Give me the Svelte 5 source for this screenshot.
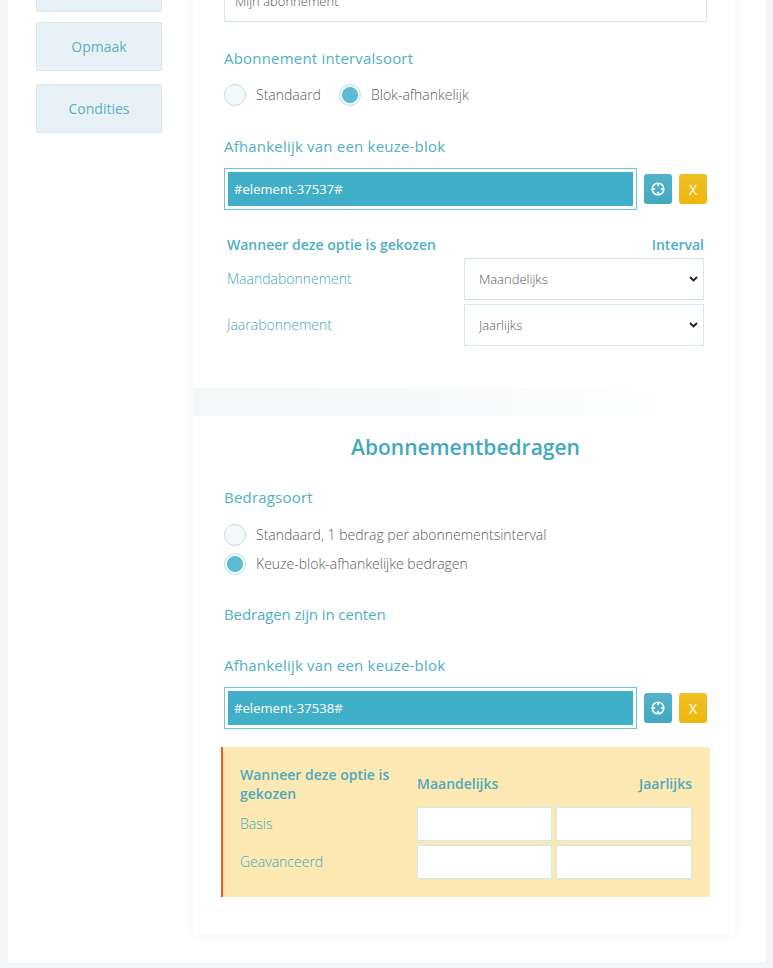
<script>
  const tabs = ["Instellingen", "Opmaak", "Condities"];
  const intervals = [
    ["Maandabonnement", "Maandelijks"],
    ["Jaarabonnement", "Jaarlijks"],
  ];
  const amounts = ["Basis", "Geavanceerd"];
</script>

<div class="page">
  <div class="panel">
    <aside class="sidebar">
      {#each tabs as tab, i}
        <div class="tab">{#if i > 0}{tab}{/if}</div>
      {/each}
    </aside>

    <main class="main">
      <section class="card first">
        <input class="text-input" value="Mijn abonnement" />

        <div class="label interval-label">Abonnement intervalsoort</div>
        <div class="radios inline">
          <label class="radio"><input type="radio" name="soort" /><span>Standaard</span></label>
          <label class="radio"><input type="radio" name="soort" checked /><span>Blok-afhankelijk</span></label>
        </div>

        <div class="label block-label">Afhankelijk van een keuze-blok</div>
        <div class="picker">
          <div class="picked"><span>#element-37537#</span></div>
          <button class="btn target" aria-label="Kies element">
            <svg width="16" height="16" viewBox="0 0 16 16" fill="none" stroke="currentColor">
              <circle cx="8" cy="8" r="5.8" stroke-width="1.6" />
              <path d="M8 2.2v3M8 10.8v3M2.2 8h3M10.8 8h3" stroke-width="1.6" />
            </svg>
          </button>
          <button class="btn remove">X</button>
        </div>

        <div class="map-head">
          <strong>Wanneer deze optie is gekozen</strong>
          <strong>Interval</strong>
        </div>
        {#each intervals as [name, value]}
          <div class="map-row">
            <span class="name">{name}</span>
            <select>
              <option selected={value === "Maandelijks"}>Maandelijks</option>
              <option selected={value === "Jaarlijks"}>Jaarlijks</option>
            </select>
          </div>
        {/each}
      </section>

      <div class="divider"></div>

      <section class="card second">
        <h2>Abonnementbedragen</h2>

        <div class="label">Bedragsoort</div>
        <div class="radios stacked">
          <label class="radio"><input type="radio" name="bedrag" /><span>Standaard, 1 bedrag per abonnementsinterval</span></label>
          <label class="radio"><input type="radio" name="bedrag" checked /><span>Keuze-blok-afhankelijke bedragen</span></label>
        </div>

        <div class="label cents">Bedragen zijn in centen</div>

        <div class="label block-label-2">Afhankelijk van een keuze-blok</div>
        <div class="picker">
          <div class="picked"><span>#element-37538#</span></div>
          <button class="btn target" aria-label="Kies element">
            <svg width="16" height="16" viewBox="0 0 16 16" fill="none" stroke="currentColor">
              <circle cx="8" cy="8" r="5.8" stroke-width="1.6" />
              <path d="M8 2.2v3M8 10.8v3M2.2 8h3M10.8 8h3" stroke-width="1.6" />
            </svg>
          </button>
          <button class="btn remove">X</button>
        </div>

        <div class="warning">
          <strong class="head">Wanneer deze optie is gekozen</strong>
          <strong class="col">Maandelijks</strong>
          <strong class="col right">Jaarlijks</strong>
          {#each amounts as name}
            <span class="name">{name}</span>
            <input class="cell" />
            <input class="cell" />
          {/each}
        </div>
      </section>
    </main>
  </div>
</div>

<style>
  :global(body) {
    background: #f3f5f7;
  }
  .page {
    height: 968px;
    overflow: hidden;
    padding: 0 7px 0 8px;
    box-sizing: border-box;
    font-family: "Open Sans", "Noto Sans", sans-serif;
    color: #555;
  }
  .panel {
    display: flex;
    height: 962px;
    overflow: hidden;
    background: #fff;
  }
  .sidebar {
    width: 185px;
    flex: none;
    box-sizing: border-box;
    padding-left: 28px;
    margin-top: -37px;
    display: flex;
    flex-direction: column;
    gap: 13px;
  }
  .tab {
    width: 126px;
    height: 49px;
    box-sizing: border-box;
    display: flex;
    align-items: center;
    justify-content: center;
    background: #e8f2f6;
    border: 1px solid #d6e8ee;
    border-radius: 2px;
    font-size: 14px;
    color: #5aaec6;
  }
  .tab:first-child {
    margin-bottom: -3px;
  }
  .main {
    width: 542px;
    flex: none;
    margin-top: -20px;
    background: #fff;
    box-shadow: 0 0 14px rgba(200, 215, 220, 0.28);
    align-self: flex-start;
  }
  .card {
    padding: 0 28px 0 31px;
    background: #fff;
  }
  .first {
    height: 408px;
  }
  .second {
    height: 519px;
  }
  .divider {
    height: 28px;
    background: linear-gradient(to right, #f3f7f8 20%, #fff 95%);
  }
  .text-input {
    display: block;
    width: 100%;
    height: 42px;
    box-sizing: border-box;
    border: 1px solid #d3e9ef;
    padding: 0 10px;
    font: 300 13px "Open Sans", sans-serif;
    color: #555;
    outline: none;
  }
  .label {
    font-size: 15px;
    line-height: 20px;
    letter-spacing: 0.2px;
    color: #4fafc5;
  }
  .interval-label {
    margin-top: 26px;
  }
  .radios.inline {
    display: flex;
    gap: 18px;
    margin-top: 16px;
  }
  .radios.stacked {
    display: flex;
    flex-direction: column;
    gap: 7px;
    margin-top: 17px;
  }
  .radio {
    display: flex;
    align-items: center;
    gap: 10px;
    font-size: 14px;
    font-weight: 300;
    line-height: 22px;
    color: #5c5c5c;
  }
  .radio input {
    appearance: none;
    width: 22px;
    height: 22px;
    margin: 0;
    border: 1px solid #bfe0e7;
    border-radius: 50%;
    background: #f3f8f9;
  }
  .radio input:checked {
    background: radial-gradient(circle, #5bbcd3 0 7.5px, #f3f8f9 8.5px);
  }
  .block-label {
    margin-top: 30px;
  }
  .picker {
    display: flex;
    align-items: center;
    gap: 7px;
    margin-top: 12px;
  }
  .picked {
    width: 413px;
    height: 42px;
    box-sizing: border-box;
    padding: 3px;
    border: 1px solid #6fc4d8;
  }
  .picked span {
    display: flex;
    align-items: center;
    height: 34px;
    padding-left: 6px;
    background: #42afc8;
    color: #fff;
    font-size: 13px;
    letter-spacing: 0.05px;
  }
  .btn {
    width: 28px;
    height: 30px;
    flex: none;
    display: flex;
    align-items: center;
    justify-content: center;
    padding: 0;
    border: none;
    border-radius: 3px;
    color: #fff;
    font: 400 14px "Open Sans", sans-serif;
  }
  .target {
    background: linear-gradient(#52b3c9, #42a9c0);
  }
  .remove {
    background: linear-gradient(#f1c026, #eeb70d);
  }
  .map-head {
    display: flex;
    justify-content: space-between;
    padding: 0 3px;
    margin-top: 25px;
    font-size: 14px;
    line-height: 20px;
    color: #4fafc5;
  }
  .map-head strong {
    font-weight: 600;
  }
  .map-row {
    display: flex;
    justify-content: space-between;
    align-items: center;
    padding: 0 3px;
    margin-top: 4px;
  }
  .map-head + .map-row {
    margin-top: 3px;
  }
  .name {
    padding-bottom: 2px;
    font-size: 14px;
    font-weight: 300;
    color: #43a9c1;
  }
  select {
    appearance: none;
    width: 240px;
    height: 42px;
    box-sizing: border-box;
    padding: 0 14px;
    border: 1px solid #d3e9ef;
    background: #fff url("data:image/svg+xml,%3Csvg xmlns='http://www.w3.org/2000/svg' width='9' height='6' viewBox='0 0 9 6'%3E%3Cpath d='M1 1l3.5 3.5L8 1' fill='none' stroke='%23222' stroke-width='1.9'/%3E%3C/svg%3E") no-repeat right 5px center;
    font: 300 13px "Open Sans", sans-serif;
    color: #5c5c5c;
    outline: none;
  }
  h2 {
    margin: 0;
    padding-top: 17px;
    font-size: 21px;
    line-height: 28px;
    font-weight: 600;
    text-align: center;
    color: #42a9bd;
  }
  h2 + .label {
    margin-top: 26px;
  }
  .cents {
    margin-top: 29px;
    letter-spacing: -0.1px;
  }
  .block-label-2 {
    margin-top: 31px;
  }
  .warning {
    display: grid;
    grid-template-columns: 173px 135px 136px;
    grid-template-rows: 36px 34px 34px;
    gap: 4px;
    align-items: center;
    width: 489px;
    height: 150px;
    box-sizing: border-box;
    margin: 18px 0 0 -3px;
    padding: 20px 18px 18px 17px;
    background: #fce8b2;
    border-left: 2px solid #f0561f;
  }
  .warning strong {
    font-size: 14px;
    line-height: 19px;
    font-weight: 600;
    color: #4fa9bd;
  }
  .warning .head {
    padding-bottom: 2px;
  }
  .warning .col {
    padding-bottom: 4px;
  }
  .right {
    text-align: right;
  }
  .cell {
    width: 100%;
    height: 34px;
    box-sizing: border-box;
    border: 1px solid #d3e9ef;
    background: #fff;
    outline: none;
  }
</style>
